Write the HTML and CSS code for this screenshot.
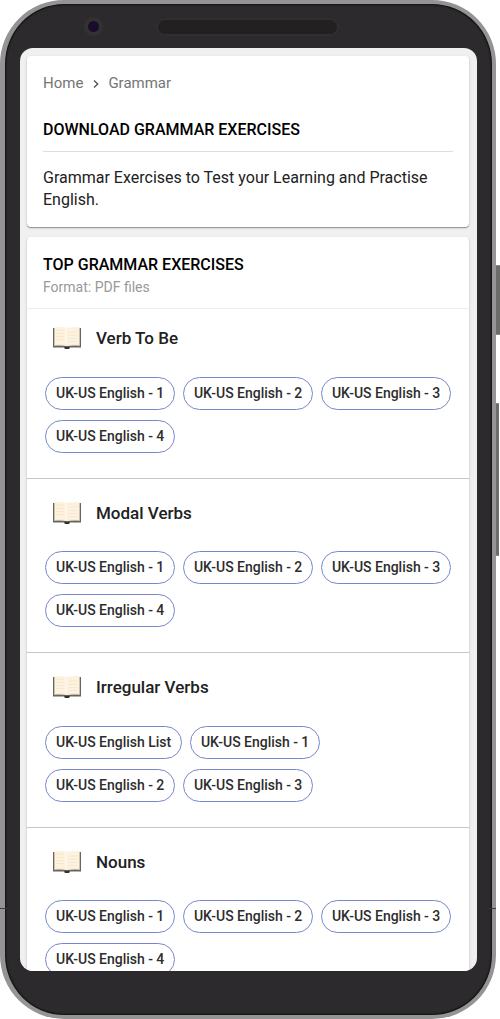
FILE: index.html
```html
<!DOCTYPE html>
<html lang="en">
<head>
<meta charset="utf-8">
<title>Grammar Exercises</title>
<link rel="stylesheet" href="styles.css">
</head>
<body>
<svg class="symbols" aria-hidden="true">
  <symbol id="book" viewBox="0 0 28 22">
    <path fill="#66655f" d="M0 1h28v19.5H16.5v1.2h-5v-1.2H0z"/>
    <path fill="#99958a" d="M1 1h26v18H1z"/>
    <path fill="#fcf2dd" d="M1.500.2C6 0 10-.2 14 .9 18-.2 22 0 26.500.2V18.500C22 18 18 18 14 19.300 10 18 6 18 1.500 18.500z"/>
    <path fill="#fffaf0" d="M12.500.8h2v17.800h-2z"/>
    <path fill="none" stroke="#f6e9d0" d="M3 3.500c3-1 5-.5 8 0M3 6.500h8M3 9.500h8M3 12.500h8M16 5.500c3-1 6 0 9-1M16 8.500h8M16 11.500h9M16 14.500h8"/>
    <path fill="none" stroke="#eee5d0" stroke-width=".5" d="M14.200 1v18M1.500 18c5-.5 9-.5 12.500.5 4-1 8-1 12.500-.5"/>
    <path fill="#302f2c" d="M11.500 19.800h5v1.200l-1 .9h-3l-1-.9z"/>
  </symbol>
</svg>
<div class="device">
  <span class="side-key power"></span>
  <span class="side-key volume"></span>
  <span class="seam seam-left"></span>
  <span class="seam seam-right"></span>
  <div class="body">
    <div class="sensors">
      <span class="camera"></span>
      <span class="speaker"></span>
    </div>
    <main class="screen">
      <section class="card intro">
        <nav class="crumbs">
          <span>Home</span>
          <svg class="chevron" viewBox="0 0 6 8"><path d="M1 .5 4.700 4 1 7.500"/></svg>
          <span>Grammar</span>
        </nav>
        <h1 class="heading">DOWNLOAD GRAMMAR EXERCISES</h1>
        <p class="lead">Grammar Exercises to Test your Learning and Practise English.</p>
      </section>
      <section class="card">
        <header class="list-header">
          <h2 class="heading">TOP GRAMMAR EXERCISES</h2>
          <p class="format">Format: PDF files</p>
        </header>
        <article class="topic first">
          <h3 class="topic-title"><svg class="book"><use href="#book"/></svg>Verb To Be</h3>
          <div class="chips"><a class="chip">UK-US English - 1</a><a class="chip">UK-US English - 2</a><a class="chip">UK-US English - 3</a><a class="chip">UK-US English - 4</a></div>
        </article>
        <article class="topic">
          <h3 class="topic-title"><svg class="book"><use href="#book"/></svg>Modal Verbs</h3>
          <div class="chips"><a class="chip">UK-US English - 1</a><a class="chip">UK-US English - 2</a><a class="chip">UK-US English - 3</a><a class="chip">UK-US English - 4</a></div>
        </article>
        <article class="topic">
          <h3 class="topic-title"><svg class="book"><use href="#book"/></svg>Irregular Verbs</h3>
          <div class="chips"><a class="chip list">UK-US English List</a><a class="chip">UK-US English - 1</a><a class="chip">UK-US English - 2</a><a class="chip">UK-US English - 3</a></div>
        </article>
        <article class="topic">
          <h3 class="topic-title"><svg class="book"><use href="#book"/></svg>Nouns</h3>
          <div class="chips"><a class="chip">UK-US English - 1</a><a class="chip">UK-US English - 2</a><a class="chip">UK-US English - 3</a><a class="chip">UK-US English - 4</a></div>
        </article>
      </section>
    </main>
  </div>
</div>
</body>
</html>
```
FILE: styles.css
```css
* { box-sizing: border-box; }
body {
  margin: 0;
  background: #fff;
  font-family: Roboto, "Liberation Sans", sans-serif;
  color: #212121;
  overflow: hidden;
}
h1, h2, h3, p { margin: 0; }
.symbols { position: absolute; width: 0; height: 0; }

/* Phone shell */
.device {
  position: relative;
  width: 500px;
  height: 1019px;
  overflow: hidden;
}
.body {
  width: 496.300px;
  height: 1018.500px;
  padding: 44px 0 0 15px;
  border: 4px solid #949494;
  border-left-width: 5px;
  border-radius: 64px;
  background: #2c2a2c;
  box-shadow: inset 0 0 0 1px #161616, inset 0 0 2px 1px #161616;
}
.sensors {
  position: absolute;
  top: 17px;
  left: 84px;
  display: flex;
  align-items: center;
  gap: 53px;
}
.camera {
  width: 19px;
  height: 19px;
  border: 4px solid #333233;
  border-radius: 50%;
  background: #190d29;
}
.speaker {
  width: 183px;
  height: 18px;
  border: 2px solid #302f30;
  border-radius: 9px;
  background: #222021;
}
.side-key {
  position: absolute;
  right: 0;
  width: 4px;
  background: #6b6b69;
  border: solid #8b8b8a;
  border-width: 1px 0;
}
.power { top: 265px; height: 70px; }
.volume { top: 403px; height: 153px; right: 1px; width: 3px; }
.seam {
  position: absolute;
  top: 908px;
  width: 7px;
  height: 1px;
  background: #3b3b3b;
}
.seam-left { left: 0; }
.seam-right { left: 489px; }

/* Page */
.screen {
  width: 457px;
  height: 923px;
  padding: 8px 8px 0 7px;
  border-radius: 13px;
  overflow: hidden;
  background: #f0f0f0;
}
.card {
  border-radius: 4px;
  background: #fff;
  box-shadow: 0 1px 1px rgba(0,0,0,.32), 0 1px 3px rgba(0,0,0,.14);
}
.intro {
  height: 171px;
  margin-bottom: 10px;
  padding: 16px 16px 0;
}
.crumbs {
  display: flex;
  align-items: center;
  height: 22px;
  font-size: 15px;
  line-height: 22px;
  color: #757575;
}
.chevron {
  width: 6px;
  height: 8px;
  margin: 1px 9px 0 10px;
  fill: none;
  stroke: #555;
  stroke-width: 1.4;
}
.heading {
  font-size: 16px;
  font-weight: 500;
  line-height: 24px;
  color: #000;
}
.intro .heading {
  margin-top: 24px;
  padding-bottom: 9px;
  border-bottom: 1px solid #dedede;
}
.lead {
  margin-top: 15px;
  font-size: 16px;
  line-height: 22px;
}
.list-header {
  height: 72px;
  padding: 16px 16px 0;
  border-bottom: 1px solid #ededed;
}
.format {
  font-size: 14px;
  line-height: 20px;
  color: #999;
}
.topic {
  height: 174.500px;
  padding: 21.900px 16px 0 18px;
  border-bottom: 1px solid #c6c6c6;
}
.first { height: 169.900px; padding-top: 17px; }
.topic-title {
  display: flex;
  align-items: center;
  height: 24px;
  padding-left: 8px;
  font-size: 17px;
  font-weight: 500;
}
.book {
  width: 28px;
  height: 22px;
  margin-right: 15px;
}
.chips {
  display: flex;
  flex-wrap: wrap;
  gap: 10px 8.400px;
  margin-top: 26.500px;
}
.first .chips { margin-top: 27px; }
.chip {
  width: 129.600px;
  height: 33px;
  padding-left: 10px;
  border: 1px solid #7986cb;
  border-radius: 17px;
  font-size: 14px;
  font-weight: 500;
  letter-spacing: -.02px;
  line-height: 31px;
  white-space: nowrap;
  color: #2d2d2d;
}
.list { width: 136.600px; }
```
